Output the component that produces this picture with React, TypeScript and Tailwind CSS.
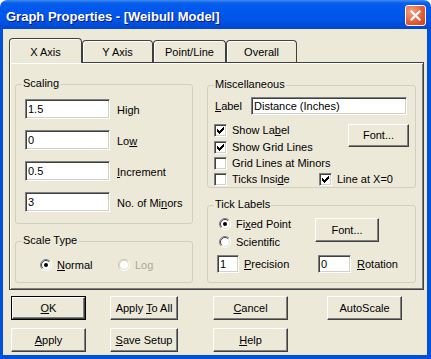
import React from 'react';

const FONT = "font-['Liberation_Sans',Arial,sans-serif]";
const SUNKEN =
  'bg-white border border-t-[#808080] border-l-[#808080] border-r-white border-b-white shadow-[inset_1px_1px_0_#404040,inset_-1px_-1px_0_#d4d0c8]';
const RAISED =
  'bg-[#ECE9D8] border border-t-white border-l-white border-r-[#404040] border-b-[#404040] shadow-[inset_-1px_-1px_0_#808080]';

function U({ children }: { children: React.ReactNode }) {
  return <span className="underline">{children}</span>;
}

function Check({ on }: { on?: boolean }) {
  const ys = [2, 3, 4, 3, 2, 1, 0];
  return (
    <div className={`${SUNKEN} w-[13px] h-[13px] shrink-0 flex items-center justify-center`}>
      {on && (
        <svg width="7" height="7" viewBox="0 0 7 7" shapeRendering="crispEdges">
          {ys.map((y, i) => (
            <rect key={i} x={i} y={y} width="1" height="3" fill="#000" />
          ))}
        </svg>
      )}
    </div>
  );
}

function Radio({ on, disabled }: { on?: boolean; disabled?: boolean }) {
  const dark1 = disabled ? '#c6c3b6' : '#808080';
  const dark2 = disabled ? '#d8d5c8' : '#404040';
  return (
    <svg width="12" height="12" viewBox="0 0 12 12" className="shrink-0">
      <circle cx="6" cy="6" r="5" fill="#fff" />
      <path d="M2.1 9.9A5.5 5.5 0 0 1 9.9 2.1" fill="none" stroke={dark1} />
      <path d="M9.9 2.1A5.5 5.5 0 0 1 2.1 9.9" fill="none" stroke="#fff" />
      <path d="M2.8 9.2A4.5 4.5 0 0 1 9.2 2.8" fill="none" stroke={dark2} />
      <path d="M9.2 2.8A4.5 4.5 0 0 1 2.8 9.2" fill="none" stroke="#e4e1d4" />
      {on && <circle cx="6" cy="6" r="2" fill="#000" />}
    </svg>
  );
}

function Group({ title, className, children }: { title: string; className: string; children: React.ReactNode }) {
  return (
    <div className={`relative border border-[#D0D0BF] rounded-[3px] ${className}`}>
      <span className="absolute -top-[8px] left-[6px] px-[1px] bg-[#ECE9D8] leading-[13px]">{title}</span>
      {children}
    </div>
  );
}

function Btn({ children, className, def }: { children: React.ReactNode; className: string; def?: boolean }) {
  if (def) {
    return (
      <div className={`border border-black ${className}`}>
        <div className={`${RAISED} w-full h-full flex items-center justify-center`}>
          <span>{children}</span>
        </div>
      </div>
    );
  }
  return (
    <div className={`${RAISED} flex items-center justify-center ${className}`}>
      <span>{children}</span>
    </div>
  );
}

export default function App() {
  const tabs = [
    { name: 'X Axis', w: 'w-[73px]', sel: true },
    { name: 'Y Axis', w: 'w-[71px]' },
    { name: 'Point/Line', w: 'w-[73px]' },
    { name: 'Overall', w: 'w-[71px]' },
  ];

  const scaling = [
    { v: '1.5', label: <>Hi<U>g</U>h</> },
    { v: '0', label: <>Lo<U>w</U></> },
    { v: '0.5', label: <><U>I</U>ncrement</> },
    { v: '3', label: <>No. of Mi<U>n</U>ors</> },
  ];

  return (
    <div className={`${FONT} w-[431px] h-[359px] bg-white flex flex-col text-[11px] text-black select-none`}>
      {/* title bar */}
      <div className="h-[29px] shrink-0 rounded-t-[7px] bg-[linear-gradient(#3d8df5_0px,#0a5fe8_3px,#0058ee_8px,#0055e8_20px,#0046d0_29px)] flex items-start justify-between pl-[6px] pr-[5px]">
        <span className="mt-[10px] text-[13px] leading-[13px] font-bold text-white [text-shadow:1px_1px_0_#0a1883]">
          Graph Properties - [Weibull Model]
        </span>
        <div className="mt-[5px] w-[21px] h-[21px] rounded-[3px] border border-white bg-[radial-gradient(circle_at_30%_30%,#f5a283,#e35b35_60%,#c83c18)] flex items-center justify-center">
          <svg width="11" height="11" viewBox="0 0 11 11">
            <path d="M1.5 1.5l8 8M9.5 1.5l-8 8" stroke="#fff" strokeWidth="2.2" strokeLinecap="square" />
          </svg>
        </div>
      </div>

      {/* client area */}
      <div className="flex-1 bg-[#ECE9D8] border-l-[3px] border-r-[4px] border-b-[4px] border-[#0050e0]">
        <div className="ml-[6px] mt-[9px] w-[415px]">
          {/* tabs */}
          <div className="h-[24px] flex items-end">
            {tabs.map((t) =>
              t.sel ? (
                <div
                  key={t.name}
                  className={`${t.w} h-[25px] -mb-[1px] relative z-10 bg-[#ECE9D8] border border-b-0 border-[#404040] rounded-t-[4px] shadow-[inset_1px_1px_0_#fff] flex justify-center pt-[5px]`}
                >
                  {t.name}
                </div>
              ) : (
                <div
                  key={t.name}
                  className={`${t.w} h-[22px] bg-[#ECE9D8] border border-b-0 border-[#404040] rounded-t-[4px] shadow-[inset_1px_1px_0_#fff] flex justify-center pt-[3px]`}
                >
                  {t.name}
                </div>
              )
            )}
          </div>

          {/* panel */}
          <div className="h-[228px] border border-[#404040] shadow-[inset_1px_1px_0_#fff,inset_-1px_-1px_0_#808080] flex">
            {/* left column */}
            <div className="ml-[5px] mt-[21px] w-[178px]">
              <Group title="Scaling" className="h-[140px] pt-[14px] pl-[9px]">
                <div className="flex flex-col gap-[11px]">
                  {scaling.map((r, i) => (
                    <div key={i} className="flex items-center">
                      <div className={`${SUNKEN} w-[85px] h-[20px] pl-[2px] flex items-center`}>{r.v}</div>
                      <span className="ml-[7px] mt-[2px]">{r.label}</span>
                    </div>
                  ))}
                </div>
              </Group>
              <Group title="Scale Type" className="mt-[17px] h-[42px] pt-[15px] pl-[24px]">
                <div className="flex items-center">
                  <div className="w-[78px] flex items-center">
                    <Radio on />
                    <span className="ml-[5px]">
                      <U>N</U>ormal
                    </span>
                  </div>
                  <div className="flex items-center">
                    <Radio disabled />
                    <span className="ml-[5px] text-[#ACA899]">Log</span>
                  </div>
                </div>
              </Group>
            </div>

            {/* right column */}
            <div className="ml-[14px] mt-[22px] w-[209px]">
              <Group title="Miscellaneous" className="h-[103px] pt-[11px] pl-[6px] pr-[6px]">
                <div className="flex items-center h-[18px]">
                  <span className="ml-[1px]">
                    <U>L</U>abel
                  </span>
                  <div className={`${SUNKEN} ml-auto mr-[2px] w-[156px] h-[18px] pl-[2px] flex items-center`}>
                    Distance (Inches)
                  </div>
                </div>
                <div className="mt-[9px] flex items-start justify-between">
                  <div className="flex flex-col gap-[4px]">
                    <div className="flex items-center h-[13px]">
                      <Check on />
                      <span className="ml-[5px]">
                        Show La<U>b</U>el
                      </span>
                    </div>
                    <div className="flex items-center h-[13px]">
                      <Check on />
                      <span className="ml-[5px]">Show Grid Lines</span>
                    </div>
                  </div>
                  <Btn className="w-[61px] h-[23px]">Font...</Btn>
                </div>
                <div className="mt-[3px] flex items-center h-[13px]">
                  <Check />
                  <span className="ml-[5px]">Grid Lines at Minors</span>
                </div>
                <div className="mt-[3px] flex items-center h-[13px]">
                  <div className="w-[105px] flex items-center">
                    <Check />
                    <span className="ml-[5px]">
                      Ticks Insi<U>d</U>e
                    </span>
                  </div>
                  <Check on />
                  <span className="ml-[5px]">Line at X=0</span>
                </div>
              </Group>

              <Group title="Tick Labels" className="mt-[17px] h-[78px] pt-[12px] pl-[9px]">
                <div className="flex items-start">
                  <div className="w-[98px] pl-[2px] flex flex-col gap-[6px]">
                    <div className="flex items-center h-[12px]">
                      <Radio on />
                      <span className="ml-[5px]">
                        Fi<U>x</U>ed Point
                      </span>
                    </div>
                    <div className="flex items-center h-[12px]">
                      <Radio />
                      <span className="ml-[5px]">Scientific</span>
                    </div>
                  </div>
                  <Btn className="w-[64px] h-[24px]">Font...</Btn>
                </div>
                <div className="mt-[7px] flex items-center">
                  <div className="w-[101px] flex items-center">
                    <div className={`${SUNKEN} w-[22px] h-[18px] pl-[2px] flex items-center`}>1</div>
                    <span className="ml-[5px]">
                      <U>P</U>recision
                    </span>
                  </div>
                  <div className={`${SUNKEN} w-[33px] h-[18px] pl-[2px] flex items-center`}>0</div>
                  <span className="ml-[6px]">
                    <U>R</U>otation
                  </span>
                </div>
              </Group>
            </div>
          </div>
        </div>

        {/* buttons */}
        <div className="ml-[8px] mt-[6px] flex flex-col gap-[8px]">
          <div className="flex items-center">
            <Btn def className="w-[75px] h-[24px]">
              <U>O</U>K
            </Btn>
            <Btn className="ml-[24px] w-[68px] h-[24px]">
              Apply <U>T</U>o All
            </Btn>
            <Btn className="ml-[35px] w-[75px] h-[24px]">
              <U>C</U>ancel
            </Btn>
            <Btn className="ml-[39px] w-[75px] h-[24px]">AutoScale</Btn>
          </div>
          <div className="flex items-center">
            <Btn className="w-[75px] h-[24px]">
              <U>A</U>pply
            </Btn>
            <Btn className="ml-[24px] w-[68px] h-[24px]">
              <U>S</U>ave Setup
            </Btn>
            <Btn className="ml-[35px] w-[75px] h-[24px]">
              <U>H</U>elp
            </Btn>
          </div>
        </div>
      </div>
    </div>
  );
}
